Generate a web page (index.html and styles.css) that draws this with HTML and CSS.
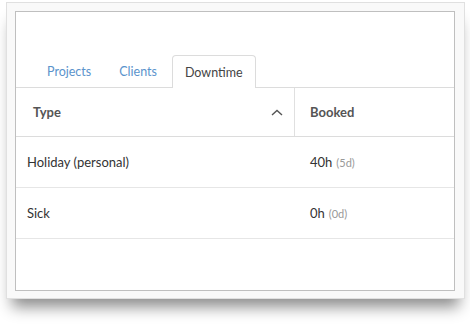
FILE: index.html
```html
<!DOCTYPE html>
<html>
<head>
<meta charset="utf-8">
<link rel="stylesheet" href="styles.css">
</head>
<body>
<div class="frame">
  <div class="panel">
    <div class="tabs">
      <div class="tab">Projects</div>
      <div class="tab">Clients</div>
      <div class="tab active">Downtime</div>
    </div>
    <div class="row head">
      <div class="cell type-head">
        <span>Type</span>
        <svg class="chev" width="12" height="7" viewBox="0 0 12 7"><path d="M1 6 L6 1.5 L11 6" fill="none" stroke="#555" stroke-width="1.4"/></svg>
      </div>
      <div class="cell booked-head">Booked</div>
    </div>
    <div class="row">
      <div class="cell first">Holiday (personal)</div>
      <div class="cell second">40h <span class="days">(5d)</span></div>
    </div>
    <div class="row">
      <div class="cell first">Sick</div>
      <div class="cell second">0h <span class="days">(0d)</span></div>
    </div>
  </div>
</div>
</body>
</html>
```
FILE: styles.css
```css
html, body {
  margin: 0;
  padding: 0;
  background: #ffffff;
}
body {
  font-family: Lato, "Open Sans", sans-serif;
  font-size: 13px;
  color: #333;
  padding-bottom: 30px;
}
.frame {
  margin: 2px 0 0 6px;
  width: 459px;
  height: 297px;
  box-sizing: border-box;
  border: 1px solid #e0e0e0;
  background: #f9f9f9;
  padding: 8px 9px 8px 8px;
  box-shadow: 0 14px 14px -6px rgba(0,0,0,0.45);
}
.panel {
  height: 280px;
  box-sizing: border-box;
  border: 1px solid #bfbfbf;
  background: #fff;
}
.tabs {
  display: flex;
  padding: 43px 0 0 18px;
  border-bottom: 1px solid #dcdcdc;
  font-size: 12.5px;
}
.tab {
  height: 32px;
  box-sizing: border-box;
  display: flex;
  align-items: center;
  padding: 0 12px;
  margin-right: 2px;
  margin-bottom: -1px;
  color: #5b93cc;
  border: 1px solid transparent;
  border-bottom: none;
  border-radius: 4px 4px 0 0;
}
.tab.active {
  color: #444;
  background: #fff;
  border-color: #dcdcdc;
  height: 33px;
}
.row {
  display: grid;
  grid-template-columns: 279px 1fr;
  height: 51px;
  box-sizing: border-box;
  border-bottom: 1px solid #e6e6e6;
}
.row.head {
  height: 49px;
  border-bottom-color: #dcdcdc;
}
.cell {
  display: flex;
  align-items: center;
}
.type-head {
  justify-content: space-between;
  padding: 0 11px 0 17px;
  border-right: 1px solid #e0e0e0;
  font-weight: bold;
  color: #555;
}
.booked-head {
  padding-left: 15px;
  font-weight: bold;
  color: #555;
}
.chev {
  display: block;
  margin-top: 1px;
}
.first {
  padding-left: 11px;
}
.second {
  padding-left: 15px;
}
.days {
  font-size: 11px;
  color: #999;
  margin-left: 4px;
}
```
